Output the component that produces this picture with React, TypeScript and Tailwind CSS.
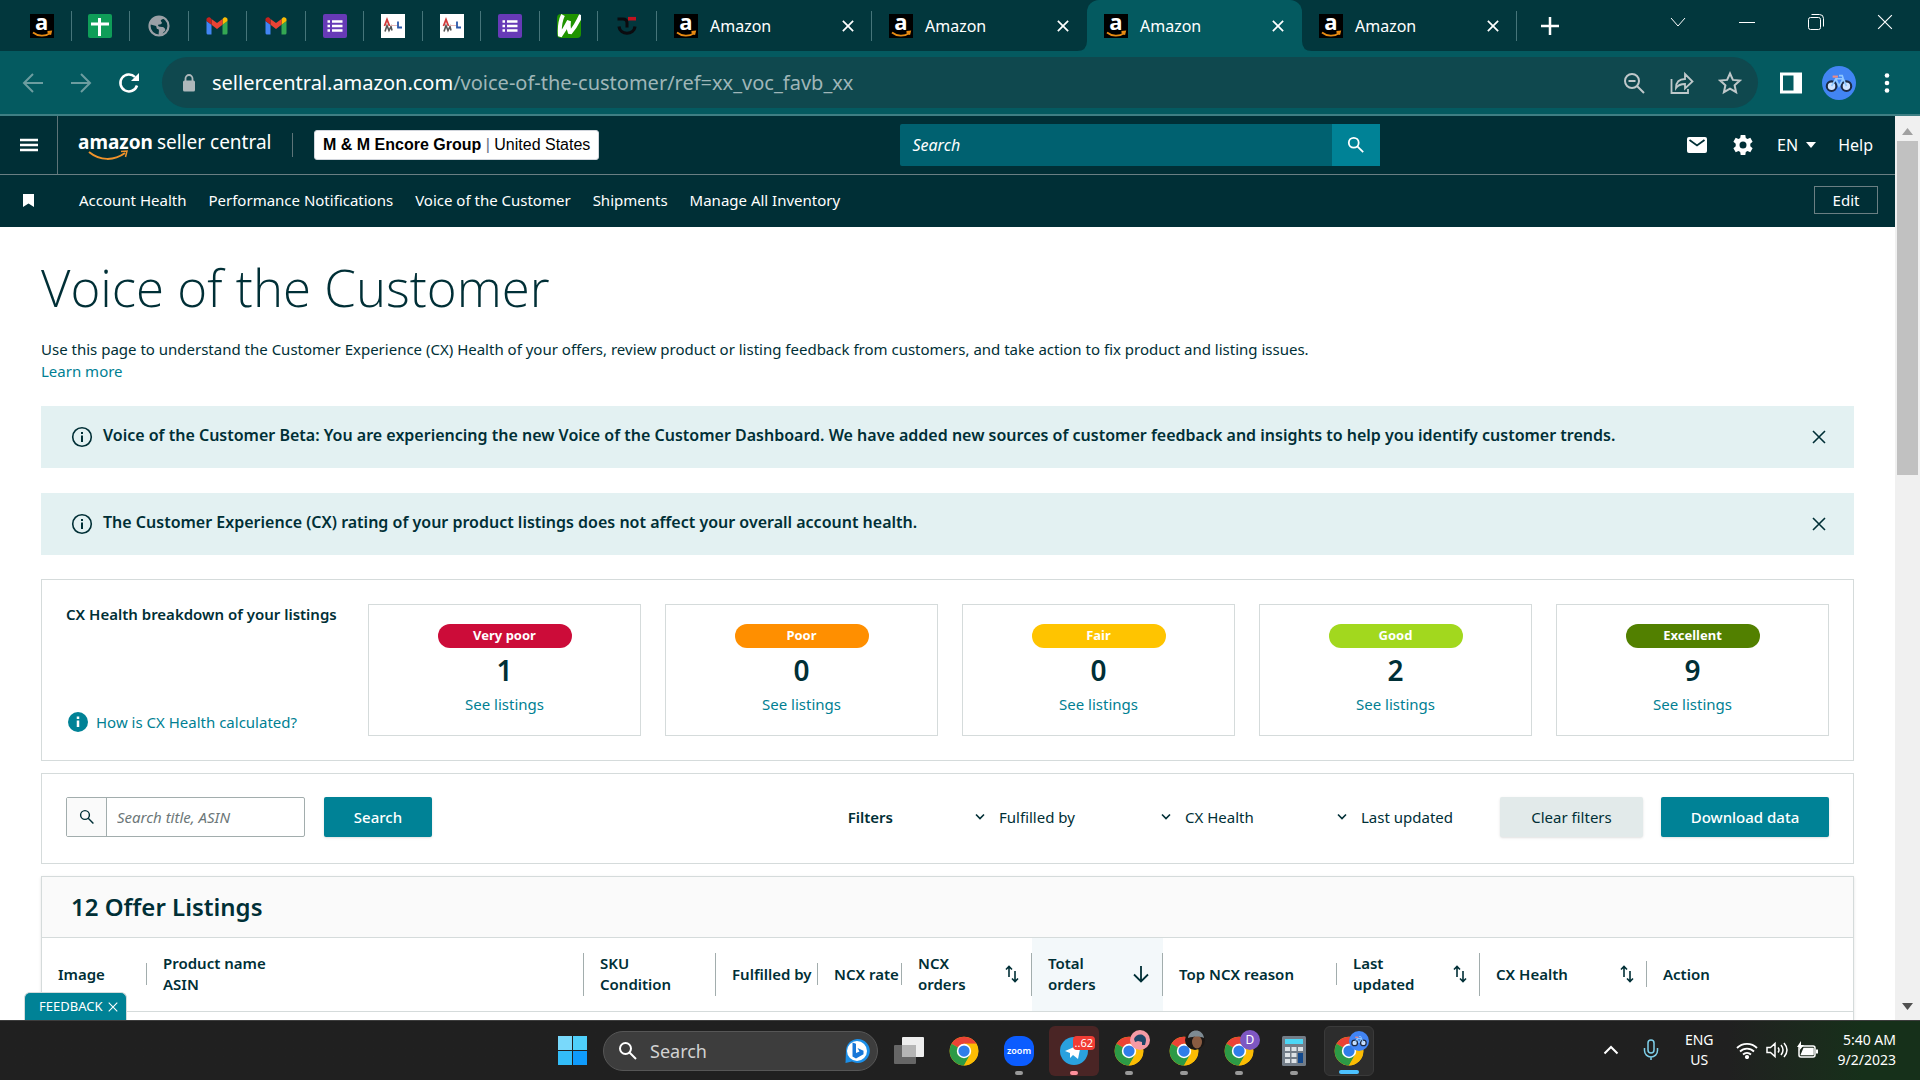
import type { ReactNode } from "react";

const Glass = ({ className, w = 2 }: { className: string; w?: number }) => (
  <svg viewBox="0 0 20 20" className={className} fill="none" stroke="currentColor" strokeWidth={w}>
    <circle cx="7.5" cy="7.5" r="5.5" />
    <path d="M11.5 11.5 18 18" />
  </svg>
);

const Cross = ({ className, w = 2 }: { className: string; w?: number }) => (
  <svg viewBox="0 0 14 14" className={className} fill="none" stroke="currentColor" strokeWidth={w}>
    <path d="M1 1l12 12M13 1L1 13" />
  </svg>
);

const AmazonIcon = () => (
  <span className="relative flex size-6 shrink-0 justify-center bg-black">
    <span className="font-['Open_Sans',sans-serif] text-[22px] leading-3.5 font-bold text-white">a</span>
    <svg viewBox="0 0 24 24" className="absolute inset-0 size-6" fill="none" stroke="#e88b12" strokeWidth="1.8">
      <path d="M3 18.5c5 4 12 4.200 17 .8M17.500 18l3.500-.4-.8 3.200" />
    </svg>
  </span>
);

const SheetIcon = () => (
  <svg viewBox="0 0 24 24" className="size-6">
    <rect width="24" height="24" rx="2" fill="#0f9d58" />
    <path d="M11.500 4v18M3 10h18" stroke="#fff" strokeWidth="3" />
  </svg>
);

const GlobeIcon = () => (
  <svg viewBox="0 0 24 24" className="size-6">
    <circle cx="12" cy="12" r="9.500" fill="none" stroke="#9aa0a6" strokeWidth="2.200" />
    <path d="M12 2c-5 1-9 4-10 8 2 1 5 1 7 2 1 1 0 3 2 3 2 1 0 4 1 7l3 0c1-3 1-4 3-5 1-2-1-4-3-4-3 0-4-1-4-2 1-1 3 0 4-2 0-1-2-2-1-3 1-1 3-1 4-2-2-1-3-2-6-2z" fill="#9aa0a6" />
  </svg>
);

const GmailIcon = () => (
  <svg viewBox="0 0 24 24" className="size-6">
    <path d="M1.500 20V7l5 3.700V20.500H3q-1.500 0-1.500-1.500z" fill="#4285f4" />
    <path d="M17.500 20.500V10.700L22.500 7v12q0 1.500-1.500 1.500z" fill="#34a853" />
    <path d="M17.500 5v5.700L22.500 7V5.600c0-2-2.300-3-3.800-1.800z" fill="#fbbc04" />
    <path d="M6.500 10.700V5l5.500 4.100L17.500 5v5.700L12 14.900z" fill="#ea4335" />
    <path d="M1.500 5.600V7l5 3.700V5L5.300 3.800C3.700 2.600 1.500 3.600 1.500 5.600z" fill="#c5221f" />
  </svg>
);

const FormsIcon = () => (
  <svg viewBox="0 0 24 24" className="size-6">
    <rect width="24" height="24" rx="2" fill="#673ab7" />
    <path d="M4.500 7.500H7M4.500 12H7M4.500 16.500H7M9 7.500h10.500M9 12h10.500M9 16.500h10.500" stroke="#fff" strokeWidth="2.400" />
  </svg>
);

const WlIcon = () => (
  <svg viewBox="0 0 24 24" className="size-6" fill="none">
    <rect width="24" height="24" fill="#fff" />
    <path d="M4.500 18 6.500 12l2 5 2-4 1 4" stroke="#555" strokeWidth="1.600" transform="translate(-.5 -.5)" />
    <path d="M3.500 12 6 5.500 8.500 12" stroke="#d23a3a" strokeWidth="1.800" />
    <path d="M9 11.500h7" stroke="#e5b5b5" />
    <path d="M17 7.500v6h4" stroke="#2b57a8" strokeWidth="1.800" />
  </svg>
);

const WIcon = () => (
  <svg viewBox="0 0 24 24" className="size-6">
    <rect width="24" height="24" rx="4" fill="#1f9300" />
    <path d="M6 1Q2 9 3 22 8 15 12 7 11 14 13 19 19 12 24 1" fill="none" stroke="#fff" strokeWidth="4" strokeLinejoin="bevel" />
  </svg>
);

const JIcon = () => (
  <svg viewBox="0 0 24 24" className="size-6" fill="none">
    <path d="M2.500 5H8q4 0 4 4v4.500" stroke="#0b0b0f" strokeWidth="3" />
    <path d="M4 12.500c1 9 15 9 16 0" stroke="#0b0b0f" strokeWidth="3.200" />
    <path d="M13 4.700h8" stroke="#c1121f" strokeWidth="3.600" />
  </svg>
);

const pinned = [AmazonIcon, SheetIcon, GlobeIcon, GmailIcon, GmailIcon, FormsIcon, WlIcon, WlIcon, FormsIcon, WIcon, JIcon];

const Bike = ({ className }: { className: string }) => (
  <svg viewBox="0 0 32 32" className={className} fill="none">
    <circle cx="16" cy="16" r="16" fill="#4285f4" />
    <circle cx="9" cy="19" r="4.500" fill="#cfe3ff" stroke="#1d2b45" strokeWidth="2" />
    <circle cx="23" cy="19" r="4.500" fill="#cfe3ff" stroke="#1d2b45" strokeWidth="2" />
    <path d="M9 19l4-7h7l3 7M13 12l3 7 4-7M20 12l-1-3h-3" stroke="#8fc7ff" strokeWidth="1.600" />
    <path d="M10 10h5" stroke="#f28b82" strokeWidth="2" />
  </svg>
);

const ChromeLogo = ({ className }: { className: string }) => (
  <svg viewBox="0 0 48 48" className={className}>
    <circle cx="24" cy="24" r="23" fill="#fbbc04" />
    <path d="M24 24 4.100 12.500A23 23 0 0 1 43.900 12.500H24z" fill="#ea4335" />
    <path d="M24 24 4.100 12.500A23 23 0 0 0 24 47l10-17.300z" fill="#2c9a46" />
    <path d="M24 12.500h19.900A23 23 0 0 1 24 47l10-17.300z" fill="#fbbc04" />
    <circle cx="24" cy="24" r="11.500" fill="#fff" />
    <circle cx="24" cy="24" r="9" fill="#2f7de9" />
  </svg>
);

function TabTitle({ active, sep }: { active?: boolean; sep?: boolean }) {
  return (
    <div className={`${active ? "rounded-t-xl bg-[#045a60]" : ""} relative flex h-full w-[215px] items-center pt-px pr-3.5 pl-[17px]`}>
      <AmazonIcon />
      <button className="ml-3 flex-1 text-left text-base text-white">Amazon</button>
      <button aria-label="Close tab" className="p-1 text-white">
        <Cross className="size-3" />
      </button>
      {sep && <span className="absolute right-0 h-[30px] w-px bg-[#46757a]" />}
      {active && (
        <>
          <svg viewBox="0 0 10 10" className="absolute bottom-0 -left-2.5 size-2.5" fill="#045a60"><path d="M10 0v10H0Q10 10 10 0z" /></svg>
          <svg viewBox="0 0 10 10" className="absolute -right-2.5 bottom-0 size-2.5" fill="#045a60"><path d="M0 0v10h10Q0 10 0 0z" /></svg>
        </>
      )}
    </div>
  );
}

function TabStrip() {
  return (
    <div className="flex h-[51px] shrink-0 items-center bg-[#02373d] pl-[13px] text-white">
      <div className="flex w-[644px] items-center pt-px">
        {pinned.map((Icon, i) => (
          <button key={i} aria-label={`Pinned tab ${i + 1}`} className="flex h-[30px] flex-1 items-center justify-center border-r border-[#46757a]">
            <Icon />
          </button>
        ))}
      </div>
      <TabTitle sep />
      <TabTitle />
      <TabTitle active />
      <TabTitle sep />
      <button aria-label="New tab" className="ml-5 p-1">
        <svg viewBox="0 0 18 18" className="size-[18px]" stroke="currentColor" strokeWidth="2.500"><path d="M9 0v18M0 9h18" /></svg>
      </button>
      <div className="ml-auto flex items-center gap-[53px] pr-[27px] pb-2">
        <button aria-label="Search tabs"><svg viewBox="0 0 16 16" className="size-4" fill="none" stroke="currentColor"><path d="M1 4l7 8 7-8" /></svg></button>
        <button aria-label="Minimize"><svg viewBox="0 0 16 16" className="size-4" stroke="currentColor"><path d="M0 8.500h16" /></svg></button>
        <button aria-label="Restore">
          <svg viewBox="0 0 16 16" className="size-4" fill="none" stroke="currentColor"><rect x=".5" y="3.500" width="12" height="12" rx="2" /><path d="M3.500.5h8a4 4 0 0 1 4 4v8" /></svg>
        </button>
        <button aria-label="Close"><Cross className="size-4" w={1} /></button>
      </div>
    </div>
  );
}

function Toolbar() {
  return (
    <div className="flex h-[65px] shrink-0 items-center border-b-2 border-[#3f7f84] bg-[#045a60] pr-5 pl-[22px] text-white">
      <button aria-label="Back" className="text-[#6d9da0]"><svg viewBox="0 0 22 22" className="size-[22px]" fill="none" stroke="currentColor" strokeWidth="2"><path d="M21 11H2M11 2l-9 9 9 9" /></svg></button>
      <button aria-label="Forward" className="ml-[26px] text-[#6d9da0]"><svg viewBox="0 0 22 22" className="size-[22px]" fill="none" stroke="currentColor" strokeWidth="2"><path d="M1 11h19M11 2l9 9-9 9" /></svg></button>
      <button aria-label="Reload" className="ml-[26px]">
        <svg viewBox="0 0 22 22" className="size-[22px]" fill="none" stroke="currentColor" strokeWidth="2.500"><path d="M19 13.500A8.500 8.500 0 1 1 17 5" /><path d="M21 1v8h-8z" fill="currentColor" stroke="none" /></svg>
      </button>
      <div className="ml-[22px] flex h-[51px] flex-1 items-center rounded-full bg-[#0f484e] pr-4 pl-5">
        <svg viewBox="0 0 14 18" className="h-[18px] w-3.5" fill="#aeb8bb"><rect x="1" y="6.500" width="12" height="11" rx="1.500" /><path d="M3.500 8V4.500a3.500 3.500 0 0 1 7 0V8" fill="none" stroke="#aeb8bb" strokeWidth="1.800" /></svg>
        <span className="ml-4 flex-1 text-xl">sellercentral.amazon.com<span className="text-[#9fb6b8]">/voice-of-the-customer/ref=xx_voc_favb_xx</span></span>
        <div className="flex items-center gap-6 text-[#bfc8ca]">
          <button aria-label="Zoom"><svg viewBox="0 0 24 24" className="size-6" fill="none" stroke="currentColor" strokeWidth="2"><circle cx="10" cy="10" r="7" /><path d="M15 15l7 7M6.500 10h7" /></svg></button>
          <button aria-label="Share"><svg viewBox="0 0 24 24" className="size-6" fill="none" stroke="currentColor" strokeWidth="1.800"><path d="M1.500 8v14H18v-4M6 17c0-6 3-9 9-9V3l7.500 7.500-7.500 7V13c-4 0-7 1-9 4z" /></svg></button>
          <button aria-label="Bookmark"><svg viewBox="0 0 24 24" className="size-6" fill="none" stroke="currentColor" strokeWidth="2"><path d="M12 2.500l2.900 6.400 6.900.7-5.200 4.700 1.500 6.900-6.100-3.500-6.100 3.500 1.500-6.900-5.200-4.700 6.900-.7z" /></svg></button>
        </div>
      </div>
      <button aria-label="Side panel" className="ml-[22px]"><svg viewBox="0 0 22 22" className="size-[22px]" fill="none" stroke="currentColor"><rect x="1.500" y="2" width="19" height="18" strokeWidth="3" /><path d="M17 1v20" strokeWidth="7" /></svg></button>
      <button aria-label="Profile" className="ml-5"><Bike className="size-[34px]" /></button>
      <button aria-label="Menu" className="ml-[18px] px-2.5"><svg viewBox="0 0 6 20" className="h-5 w-1.5" fill="currentColor"><circle cx="3" cy="2.500" r="2.300" /><circle cx="3" cy="10" r="2.300" /><circle cx="3" cy="17.500" r="2.300" /></svg></button>
    </div>
  );
}

function SiteHeader() {
  return (
    <header className="bg-[#002f36] text-white">
      <div className="grid h-[59px] grid-cols-[7fr_480px_4fr] items-center border-b border-[#6a7f83]">
        <div className="flex h-full items-center">
          <button aria-label="Open menu" className="flex h-full w-[58px] items-center justify-center border-r border-[#5d7478]">
            <svg viewBox="0 0 18 14" className="h-3.5 w-[18px]" stroke="currentColor" strokeWidth="2.500"><path d="M0 2h18M0 7h18M0 12h18" /></svg>
          </button>
          <a href="#home" className="relative ml-5 flex w-48 items-center gap-1 pb-1.5 text-[19px] whitespace-nowrap">
            <span className="font-bold">amazon</span><span>seller central</span>
            <svg viewBox="0 0 42 12" className="absolute top-[22px] left-2.5 h-3 w-[42px]" fill="none" stroke="#f0932b" strokeWidth="2"><path d="M1 2c11 9 25 9 36 1" /><path d="M33 1.500l6-.5-1.500 6" strokeWidth="1.500" /></svg>
          </a>
          <span className="ml-[22px] h-6 w-px bg-[#5d7478]" />
          <button className="ml-[21px] rounded-[3px] border border-gray-300 bg-white px-2 py-0.5 font-['Liberation_Sans',sans-serif] text-base whitespace-nowrap text-black">
            <b>M &amp; M Encore Group</b> <span className="text-gray-500">|</span> United States
          </button>
        </div>
        <form className="flex h-[42px]" onSubmit={(e) => e.preventDefault()}>
          <input aria-label="Search" placeholder="Search" className="min-w-0 flex-1 rounded-l-xs bg-[#006170] px-3 text-base text-white italic outline-none placeholder:text-white" />
          <button aria-label="Submit search" className="flex w-12 items-center justify-center bg-[#008296]"><Glass className="size-[18px]" /></button>
        </form>
        <div className="flex items-center justify-end pr-[22px] text-base">
          <button aria-label="Messages">
            <svg viewBox="0 0 24 24" className="size-6"><rect x="2" y="4" width="20" height="16" rx="2" fill="#fff" /><path d="M4.500 7l7.500 5.500L19.500 7" fill="none" stroke="#002f36" strokeWidth="1.800" /></svg>
          </button>
          <button aria-label="Settings" className="ml-[22px]">
            <svg viewBox="0 0 24 24" className="size-6" fill="currentColor"><path fillRule="evenodd" d="M9.700 2h4.600l.5 2.900 1.700 1 2.800-1.100 2.300 4-2.300 1.900v2.600l2.300 1.900-2.300 4-2.800-1.100-1.700 1-.5 2.900H9.700l-.5-2.900-1.700-1-2.800 1.100-2.300-4 2.300-1.900v-2.600L2.400 8.800l2.300-4 2.800 1.100 1.700-1zM12 8.500a3.500 3.500 0 1 0 0 7 3.500 3.500 0 0 0 0-7z" /></svg>
          </button>
          <button className="ml-[22px] flex items-center gap-2">EN<svg viewBox="0 0 10 6" className="h-1.5 w-2.5" fill="currentColor"><path d="M0 0h10L5 6z" /></svg></button>
          <a href="#help" className="ml-[22px]">Help</a>
        </div>
      </div>
      <nav className="flex h-[52px] items-center pr-[17px] pb-0.5 pl-[23px] text-[15px]">
        <svg viewBox="0 0 11 13" className="h-[13px] w-[11px]" fill="currentColor"><path d="M0 0h11v13L5.500 9.500 0 13z" /></svg>
        <div className="ml-[45px] flex gap-[22px]">
          <a href="#health">Account Health</a>
          <a href="#notifications">Performance Notifications</a>
          <a href="#voice">Voice of the Customer</a>
          <a href="#shipments">Shipments</a>
          <a href="#inventory">Manage All Inventory</a>
        </div>
        <button className="ml-auto h-7 w-16 border border-[#6a7f83]">Edit</button>
      </nav>
    </header>
  );
}

function Banner({ children }: { children: ReactNode }) {
  return (
    <div className="flex h-[62px] items-center bg-[#e3f1f2] pr-7 pl-[30px]">
      <svg viewBox="0 0 22 22" className="size-[22px] shrink-0" fill="none" stroke="currentColor" strokeWidth="1.600"><circle cx="11" cy="11" r="9.300" /><path d="M11 9.500V16M11 6v2" strokeWidth="2" /></svg>
      <p className="ml-2.5 flex-1 pb-1 text-base font-semibold">{children}</p>
      <button aria-label="Dismiss"><Cross className="size-3.5" w={1.6} /></button>
    </div>
  );
}

const ratings = [
  { label: "Very poor", count: 1, color: "bg-[#cc0c39]" },
  { label: "Poor", count: 0, color: "bg-[#ff8f00]" },
  { label: "Fair", count: 0, color: "bg-[#ffc400]" },
  { label: "Good", count: 2, color: "bg-[#a2d81e]" },
  { label: "Excellent", count: 9, color: "bg-[#528000]" },
];

function Breakdown() {
  return (
    <section className="mt-6 flex gap-6 border border-[#d5dbdb] p-6">
      <div className="flex w-[278px] shrink-0 flex-col justify-between">
        <h2 className="text-[15px] leading-5 font-semibold">CX Health breakdown of your listings</h2>
        <a href="#how" className="flex items-center gap-2 pb-0.5 text-[15px] leading-6 text-[#007f93]">
          <svg viewBox="0 0 20 20" className="ml-0.5 size-5"><circle cx="10" cy="10" r="10" fill="#008296" /><path d="M10 8.500V15M10 4.500v2.500" stroke="#fff" strokeWidth="2.500" /></svg>
          How is CX Health calculated?
        </a>
      </div>
      <div className="grid flex-1 grid-cols-5 gap-6">
        {ratings.map((r) => (
          <div key={r.label} className="flex h-[132px] flex-col items-center border border-[#d5dbdb] pt-[19px]">
            <span className={`${r.color} flex h-6 w-[134px] items-center justify-center rounded-full text-[13px] font-bold text-white`}>{r.label}</span>
            <span className="mt-1 text-[28px] leading-9 font-semibold">{r.count}</span>
            <a href="#listings" className="mt-1 text-[15px] leading-6 text-[#007f93]">See listings</a>
          </div>
        ))}
      </div>
    </section>
  );
}

function Filter({ label, className }: { label: string; className: string }) {
  return (
    <label className={`flex items-center gap-3.5 ${className}`}>
      <svg viewBox="0 0 10 8" className="h-2 w-2.5 shrink-0" fill="none" stroke="currentColor" strokeWidth="1.600"><path d="M1 1.500l4 4 4-4" /></svg>
      <select aria-label={label} className="w-full appearance-none bg-transparent text-[15px] outline-none"><option>{label}</option></select>
    </label>
  );
}

function Filters() {
  return (
    <section className="mt-3 flex h-[91px] items-center border border-[#d5dbdb] px-6 pb-[3px]">
      <div className="flex h-10 w-[239px] rounded-xs border border-[#a2adad]">
        <span className="flex w-10 items-center justify-center border-r border-[#a2adad] bg-[#fafafa]"><Glass className="size-4" w={1.8} /></span>
        <input aria-label="Search title, ASIN" placeholder="Search title, ASIN" className="min-w-0 flex-1 px-2.5 text-[15px] italic outline-none placeholder:text-[#6c7778]" />
      </div>
      <button className="ml-[19px] h-10 w-[108px] rounded-xs bg-[#008296] text-[15px] font-medium text-white shadow-sm">Search</button>
      <span className="ml-auto text-[15px] font-semibold">Filters</span>
      <Filter label="Fulfilled by" className="ml-[82px] w-[186px]" />
      <Filter label="CX Health" className="w-[176px]" />
      <Filter label="Last updated" className="w-[163px]" />
      <button className="h-10 w-[143px] rounded-xs bg-[#e2eaea] text-[15px] shadow-sm">Clear filters</button>
      <button className="ml-[18px] h-10 w-[168px] rounded-xs bg-[#008296] text-[15px] font-medium text-white shadow-sm">Download data</button>
    </section>
  );
}

const SortIcon = () => (
  <svg viewBox="0 0 14 20" className="h-5 w-3.5 shrink-0" fill="none" stroke="currentColor" strokeWidth="1.600"><path d="M4 2.500V13M10 7v10.500M1 5.500l3-3 3 3M7 14.500l3 3 3-3" /></svg>
);
const DownIcon = () => (
  <svg viewBox="0 0 18 18" className="size-[18px] shrink-0" fill="none" stroke="currentColor" strokeWidth="1.800"><path d="M9 1v15M2 9.500l7 7 7-7" /></svg>
);

const columns: { lines: string[]; width: string; bar: string; icon?: ReactNode; hot?: boolean }[] = [
  { lines: ["Image"], width: "w-[105px]", bar: "h-[22px]" },
  { lines: ["Product name", "ASIN"], width: "", bar: "h-[43px]" },
  { lines: ["SKU", "Condition"], width: "w-[132px]", bar: "h-[43px]" },
  { lines: ["Fulfilled by"], width: "w-[102px]", bar: "h-[22px]" },
  { lines: ["NCX rate"], width: "w-[84px]", bar: "h-[22px]" },
  { lines: ["NCX", "orders"], width: "w-[130px]", bar: "h-[43px]", icon: <SortIcon /> },
  { lines: ["Total", "orders"], width: "w-[131px]", bar: "h-[43px]", icon: <DownIcon />, hot: true },
  { lines: ["Top NCX reason"], width: "w-[174px]", bar: "h-[22px]" },
  { lines: ["Last", "updated"], width: "w-[143px]", bar: "h-[43px]", icon: <SortIcon /> },
  { lines: ["CX Health"], width: "w-[167px]", bar: "h-[26px]", icon: <SortIcon /> },
  { lines: ["Action"], width: "w-[206px]", bar: "" },
];

function Listings() {
  return (
    <section className="mt-3 min-h-36 flex-1 border border-b-0 border-[#d5dbdb] shadow">
      <h2 className="flex h-[61px] items-center border-b border-[#d5dbdb] bg-[#fafafa] pl-[29px] text-2xl font-semibold">12 Offer Listings</h2>
      <table className="w-full table-fixed border-b border-[#d5dbdb] text-left text-[15px] leading-[21px]">
        <thead>
          <tr className="h-[73px]">
            {columns.map((c, i) => (
              <th key={c.lines[0]} className={`${c.width} ${c.hot ? "bg-[#f3f8fa]" : ""} p-0 font-semibold`}>
                <div className={`${c.bar} ${i < columns.length - 1 ? "border-r border-[#a2adad]" : ""} ${c.icon ? "pr-3" : ""} flex items-center justify-between pl-4`}>
                  <span className="whitespace-nowrap">{c.lines.map((l) => <span key={l} className="block">{l}</span>)}</span>
                  {c.icon && <button aria-label={`Sort by ${c.lines.join(" ")}`}>{c.icon}</button>}
                </div>
              </th>
            ))}
          </tr>
        </thead>
      </table>
    </section>
  );
}

function Scrollbar() {
  return (
    <div className="flex w-[25px] shrink-0 flex-col items-center bg-[#f0f0f0]">
      <svg viewBox="0 0 11 7" className="mt-3 mb-1.5 h-[7px] w-[11px] shrink-0" fill="#a0a0a0"><path d="M0 7h11L5.500 0z" /></svg>
      <div className="h-[37%] w-[21px] bg-[#c1c1c1]" />
      <svg viewBox="0 0 11 7" className="mt-auto mb-2.5 h-[7px] w-[11px] shrink-0" fill="#505050"><path d="M0 0h11L5.500 7z" /></svg>
    </div>
  );
}

function TaskItem({ label, children, dot, box }: { label: string; children: ReactNode; dot?: string; box?: string }) {
  return (
    <button aria-label={label} className={`relative flex h-[50px] w-[50px] items-center justify-center rounded-md ${box ?? ""}`}>
      {children}
      {dot && <span className={`absolute bottom-px h-1 rounded-full ${dot}`} />}
    </button>
  );
}

function Taskbar() {
  return (
    <footer className="grid h-[60px] shrink-0 grid-cols-[1fr_auto_1fr] items-center border-t border-[#3d3d3d] bg-linear-to-r from-[#202020] from-90% to-[#16301a] to-97% pl-3 text-white">
      <span />
      <div className="flex items-center gap-[5px]">
        <button aria-label="Start" className="grid size-[29px] grid-cols-2 gap-px">
          <i className="bg-[#79d9fb]" /><i className="bg-[#4fd0fb]" /><i className="bg-[#33bdf8]" /><i className="bg-[#0f9bfb]" />
        </button>
        <button className="mr-px ml-[11px] flex h-10 w-[275px] items-center rounded-full border border-[#565656] bg-[#3d3d3d] pr-[7px] pl-3.5">
          <Glass className="size-5" />
          <span className="ml-3 flex-1 text-left text-lg text-[#d2d2d2]">Search</span>
          <svg viewBox="0 0 26 26" className="size-[26px]"><path d="M13 1a12 12 0 1 1-5 22.500L1.500 25l.5-12A12 12 0 0 1 13 1z" fill="#1c8fe8" /><circle cx="13" cy="13" r="10" fill="#fff" /><path d="M8.500 4.500l3.500 1.200V15l3.500-1.500-2-3.500 6 2.800v3.400l-7.500 4.300-3.500-2z" fill="#1877d8" /></svg>
        </button>
        <TaskItem label="Task view"><svg viewBox="0 0 30 30" className="size-[30px]"><rect x="8" y="1" width="22" height="20" rx="1" fill="#eee" /><rect x="0" y="9" width="22" height="19" rx="1" fill="#666" /><path d="M8 9h14v12H8z" fill="#b5b5b5" /></svg></TaskItem>
        <TaskItem label="Chrome"><ChromeLogo className="size-[30px]" /></TaskItem>
        <TaskItem label="Zoom" dot="w-2 bg-[#999]"><span className="flex size-[30px] items-center justify-center rounded-xl bg-[#0b5cff] text-[9px] font-semibold">zoom</span></TaskItem>
        <TaskItem label="Telegram" box="bg-[#4a2525]" dot="w-2 bg-[#ff8f9b]">
          <svg viewBox="0 0 28 28" className="size-7"><circle cx="14" cy="14" r="14" fill="#2aa1de" /><path d="M5 14l16-7-3 15-5-4-3 3v-5z" fill="#fff" /></svg>
          <span className="absolute top-2.5 right-1 rounded-sm bg-[#f23c34] px-0.5 text-[11px] leading-3.5">..62</span>
        </TaskItem>
        <TaskItem label="Chrome profile 1" dot="w-2 bg-[#999]"><ChromeLogo className="size-[30px]" /><svg viewBox="0 0 20 20" className="absolute top-1 right-1 size-5"><circle cx="10" cy="10" r="10" fill="#f59aa5" /><path d="M4 9c1-4 7-6 10-3 3 2 2 6 1 9h-3v-3l-4-1-3 1z" fill="#1f4568" /></svg></TaskItem>
        <TaskItem label="Chrome profile 2" dot="w-2 bg-[#999]"><ChromeLogo className="size-[30px]" /><svg viewBox="0 0 20 20" className="absolute top-1 right-1 size-5"><circle cx="10" cy="10" r="10" fill="#1b1715" /><ellipse cx="12" cy="12" rx="5" ry="6.500" fill="#8a5c42" /><path d="M3 8c1-10 15-10 16 0-5-2-9-2-16 0z" fill="#7e8b93" /></svg></TaskItem>
        <TaskItem label="Chrome profile 3" dot="w-2 bg-[#999]"><ChromeLogo className="size-[30px]" /><span className="absolute top-1 right-1 flex size-5 items-center justify-center rounded-full bg-[#7e57c2] text-xs">D</span></TaskItem>
        <TaskItem label="Calculator" dot="w-2 bg-[#999]"><svg viewBox="0 0 24 30" className="h-[30px] w-6"><rect width="24" height="30" rx="1.500" fill="#737d88" /><path d="M3 3h18v5H3z" fill="#4cd7f6" /><path d="M3 11h5v4H3zM9.500 11h5v4h-5zM16 11h5v4h-5zM3 17h5v4H3zM9.500 17h5v4h-5zM3 23h5v4H3zM9.500 23h5v4h-5z" fill="#dde2e6" /><path d="M16 17h5v10h-5z" fill="#134a8e" /></svg></TaskItem>
        <TaskItem label="Chrome profile 4" box="border border-[#3a3a3a] bg-[#2d2d2d]" dot="w-5 bg-[#4cc2ff]"><ChromeLogo className="size-[30px]" /><Bike className="absolute top-1 right-1 size-5" /></TaskItem>
      </div>
      <div className="flex items-center justify-end pr-6 pb-0.5 text-sm leading-5">
        <button aria-label="Hidden icons"><svg viewBox="0 0 16 10" className="h-2.5 w-4" fill="none" stroke="currentColor" strokeWidth="2"><path d="M1.500 8.500L8 2l6.500 6.500" /></svg></button>
        <svg viewBox="0 0 16 22" className="ml-6 h-[22px] w-4" fill="none" stroke="#7fd0ea" strokeWidth="1.500"><rect x="5" y="1" width="6" height="13" rx="3" /><path d="M1.500 9v2.500a6.500 6.500 0 0 0 13 0V9M8 18v3" /></svg>
        <span className="ml-[26px] text-center">ENG<br />US</span>
        <svg viewBox="0 0 22 18" className="ml-[22px] h-[18px] w-[22px]" fill="none" stroke="currentColor" strokeWidth="1.800"><path d="M1 7a14 14 0 0 1 20 0M4 10.500a10 10 0 0 1 14 0M7 13.500a6 6 0 0 1 8 0" /><circle cx="11" cy="16" r="1.200" fill="currentColor" /></svg>
        <svg viewBox="0 0 22 18" className="ml-2 h-[18px] w-[22px]" fill="none" stroke="currentColor" strokeWidth="1.500"><path d="M1 6.500h3.500L9 2.500v13L4.500 11.500H1zM12 6.500q2 2.500 0 5M15 4q4 5 0 10M18 2q6 7 0 14" /></svg>
        <svg viewBox="0 0 22 18" className="ml-2 h-[18px] w-[22px]" fill="none" stroke="currentColor" strokeWidth="1.500"><rect x="3" y="5" width="16" height="11" rx="2" /><path d="M8 7.500h9v6H5.500z" fill="currentColor" /><path d="M21 8.500v4" strokeWidth="2" /><path d="M5 0L1 6h3l-1 4 5-6H5z" fill="currentColor" stroke="none" /></svg>
        <span className="ml-5 text-right">5:40 AM<br />9/2/2023</span>
      </div>
    </footer>
  );
}

export default function App() {
  return (
    <div className="flex h-screen w-full flex-col overflow-hidden bg-white font-['Noto_Sans',sans-serif] text-[#002f36]">
      <TabStrip />
      <Toolbar />
      <div className="relative flex min-h-0 flex-1">
        <div className="flex min-w-0 flex-1 flex-col overflow-hidden">
          <SiteHeader />
          <main className="flex flex-1 flex-col px-[41px] pt-7">
            <h1 className="font-['Open_Sans',sans-serif] text-[51px] leading-[64px] font-light">Voice of the Customer</h1>
            <p className="mt-[19px] text-[15px] leading-[22px]">
              Use this page to understand the Customer Experience (CX) Health of your offers, review product or listing feedback from customers, and take action to fix product and listing issues.
              <br />
              <a href="#learn" className="text-[#007f93]">Learn more</a>
            </p>
            <div className="mt-6 flex flex-col gap-[25px]">
              <Banner>Voice of the Customer Beta: You are experiencing the new Voice of the Customer Dashboard. We have added new sources of customer feedback and insights to help you identify customer trends.</Banner>
              <Banner>The Customer Experience (CX) rating of your product listings does not affect your overall account health.</Banner>
            </div>
            <Breakdown />
            <Filters />
            <Listings />
          </main>
        </div>
        <Scrollbar />
        <div className="absolute bottom-0 left-6 flex h-7 items-center gap-1.5 rounded-t-md border border-b-0 border-[#d5dbdb] bg-[#008296] pr-2 pl-3.5 text-[13px] text-white">
          <button>FEEDBACK</button>
          <button aria-label="Close feedback"><Cross className="size-2.5" w={1.5} /></button>
        </div>
      </div>
      <Taskbar />
    </div>
  );
}
